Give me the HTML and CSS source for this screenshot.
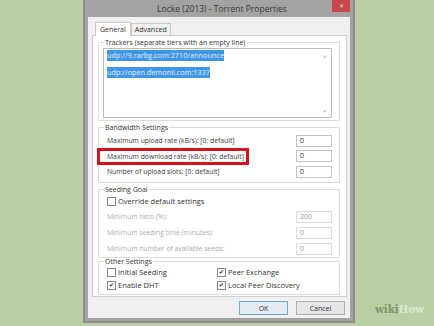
FILE: index.html
```html
<!DOCTYPE html>
<html>
<head>
<meta charset="utf-8">
<link rel="stylesheet" href="styles.css">
</head>
<body>
<div class="window">
  <div class="titlebar">
    <span class="title">Locke (2013) - Torrent Properties</span>
    <span class="close">✕</span>
  </div>
  <div class="client">
    <div class="tabs">
      <span class="tab active">General</span>
      <span class="tab">Advanced</span>
    </div>
    <div class="panel">
      <fieldset class="group trackers">
        <legend>Trackers (separate tiers with an empty line)</legend>
        <div class="textarea">
          <div class="lines">
            <span class="sel">udp://9.rarbg.com:2710/announce</span>
            <span class="sel">udp://open.demonii.com:1337</span>
          </div>
          <div class="scroll"><span>▲</span><span>▼</span></div>
        </div>
      </fieldset>
      <fieldset class="group">
        <legend>Bandwidth Settings</legend>
        <div class="row"><span>Maximum upload rate (kB/s): [0: default]</span><span class="input">0</span></div>
        <div class="row"><span class="highlight">Maximum download rate (kB/s): [0: default]</span><span class="input">0</span></div>
        <div class="row"><span>Number of upload slots: [0: default]</span><span class="input">0</span></div>
      </fieldset>
      <fieldset class="group seeding">
        <legend>Seeding Goal</legend>
        <div class="check first"><span class="box"></span>Override default settings</div>
        <div class="row dim"><span>Minimum ratio (%):</span><span class="input">200</span></div>
        <div class="row dim"><span>Minimum seeding time (minutes):</span><span class="input">0</span></div>
        <div class="row dim"><span>Minimum number of available seeds:</span><span class="input">0</span></div>
      </fieldset>
      <fieldset class="group other">
        <legend>Other Settings</legend>
        <div class="grid">
          <div class="check"><span class="box"></span>Initial Seeding</div>
          <div class="check"><span class="box on">✔</span>Peer Exchange</div>
          <div class="check"><span class="box on">✔</span>Enable DHT</div>
          <div class="check"><span class="box on">✔</span>Local Peer Discovery</div>
        </div>
      </fieldset>
    </div>
    <div class="buttons">
      <span class="btn default">OK</span>
      <span class="btn">Cancel</span>
    </div>
  </div>
</div>
<div class="wm">wiki<span>How</span></div>
</body>
</html>
```
FILE: styles.css
```css
html, body {
  margin: 0;
  padding: 0;
}
body {
  width: 434px;
  height: 326px;
  background: #b9d0a4;
  font-family: "Open Sans", "Noto Sans", sans-serif;
  font-size: 7px;
  color: #3a3a3a;
  position: relative;
  overflow: hidden;
}
.window {
  margin-left: 83px;
  width: 272px;
  height: 323px;
  background: #a2a3a2;
  box-sizing: border-box;
  border-left: 2px solid #8c8d8c;
  border-right: 2px solid #8c8d8c;
  border-bottom: 2px solid #8c8d8c;
  display: flex;
  flex-direction: column;
}
.titlebar {
  height: 17px;
  display: flex;
  align-items: center;
  justify-content: center;
  position: relative;
}
.title {
  font-size: 8.5px;
  color: #3a3a3a;
  margin-left: 6px;
}
.close {
  position: absolute;
  right: 3px;
  top: 0;
  width: 18px;
  height: 12px;
  background: #c9484a;
  color: #f3d6d6;
  font-size: 6px;
  display: flex;
  align-items: center;
  justify-content: center;
}
.client {
  flex: 1;
  margin: 0 3px 3px 3px;
  background: #f0f0f0;
  display: flex;
  flex-direction: column;
  padding: 4px 3px 0 4px;
}
.tabs {
  display: flex;
  align-items: flex-end;
  height: 14px;
  padding-left: 3px;
  position: relative;
  z-index: 1;
}
.tab {
  height: 11px;
  line-height: 11px;
  padding: 0 3px;
  border: 1px solid #c9c9c9;
  border-bottom: none;
  background: #f0f0f0;
  color: #333;
}
.tab.active {
  height: 13px;
  line-height: 13px;
  background: #fff;
  margin-bottom: -1px;
  padding: 0 4px;
}
.panel {
  height: 262px;
  box-sizing: border-box;
  background: #fff;
  border: 1px solid #cdcdcd;
  display: flex;
  flex-direction: column;
  padding: 0 6px 0 5px;
}
.group {
  margin: 0;
  padding: 0 7px 2px 4px;
  border: 1px solid #dcdcdc;
  border-radius: 1px;
  min-width: 0;
  margin-top: 1px;
}
.group legend {
  padding: 0 1px;
  margin-left: 1px;
  color: #333;
  line-height: 11px;
}
.seeding {
  padding-bottom: 0;
}
.other {
  margin-top: -2px;
}
.textarea {
  height: 70px;
  border: 1px solid #b9bcc2;
  display: flex;
  padding: 1px 2px 2px 3px;
  box-sizing: border-box;
}
.lines {
  flex: 1;
  display: flex;
  flex-direction: column;
  align-items: flex-start;
  gap: 6px;
}
.sel {
  background: #3f95e6;
  color: #e4f1ff;
  line-height: 11px;
  font-size: 7.3px;
}
.scroll {
  width: 7px;
  display: flex;
  flex-direction: column;
  justify-content: space-between;
  color: #c8c8c8;
  font-size: 5px;
  padding: 3px 0 1px;
}
.row {
  display: flex;
  justify-content: space-between;
  align-items: center;
  height: 15.5px;
  padding-left: 4px;
  font-size: 6.8px;
}
.row .input {
  width: 36px;
  height: 12px;
  box-sizing: border-box;
  border: 1px solid #c4c4c4;
  line-height: 10px;
  padding-left: 3px;
  color: #333;
  font-size: 7px;
}
.highlight {
  position: relative;
}
.highlight::after {
  content: "";
  position: absolute;
  left: -10px;
  width: 152px;
  box-sizing: border-box;
  top: -4px;
  bottom: -4px;
  border: 3px solid #d4141c;
}
.row.dim {
  height: 16px;
}
.dim {
  color: #ababab;
}
.dim .input {
  border-color: #dedede;
  color: #999;
}
.check {
  display: flex;
  align-items: center;
  gap: 2px;
  height: 13px;
  padding-left: 4px;
  font-size: 7.5px;
  color: #333;
}
.check.first {
  height: 13px;
  margin-bottom: 1px;
}
.box {
  width: 7px;
  height: 7px;
  border: 1px solid #888;
  background: #fff;
  display: inline-flex;
  align-items: center;
  justify-content: center;
  font-size: 6px;
  color: #222;
  line-height: 1;
}
.grid {
  display: grid;
  grid-template-columns: 110px 1fr;
  margin-top: -1px;
}
.grid .check {
  height: 13px;
}
.buttons {
  display: flex;
  justify-content: flex-end;
  gap: 8px;
  padding-top: 4px;
  padding-right: 2px;
}
.btn {
  width: 49px;
  height: 14px;
  box-sizing: border-box;
  border: 1px solid #b0b0b0;
  background: #e6e6e6;
  display: flex;
  align-items: center;
  justify-content: center;
  color: #333;
}
.btn.default {
  border-color: #7ba6d4;
  background: #e4ebf2;
}
.wm {
  position: absolute;
  left: 375px;
  top: 303px;
  font-family: "DejaVu Serif", serif;
  font-weight: bold;
  font-size: 10.5px;
  color: #7c9470;
  letter-spacing: -0.2px;
}
.wm span {
  color: #dbe7d0;
  font-weight: bold;
}
```
